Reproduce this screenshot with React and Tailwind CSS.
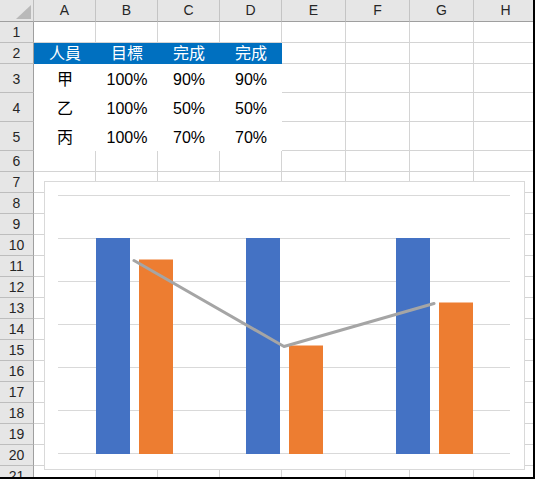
import React from 'react';

const cols = ['A', 'B', 'C', 'D', 'E', 'F', 'G', 'H'];
const rowCount = 21;
const tallRows = [3, 4, 5];

const header = ['人員', '目標', '完成', '完成'];
const data = {
  3: ['甲', '100%', '90%', '90%'],
  4: ['乙', '100%', '50%', '50%'],
  5: ['丙', '100%', '70%', '70%'],
};

const groups = [
  { x: 52, done: 0.9 },
  { x: 202, done: 0.5 },
  { x: 352, done: 0.7 },
];

const font = { fontFamily: '"Liberation Sans", "Noto Sans CJK TC", sans-serif' };

const Chart = () => {
  const base = 272;
  const unit = 215; // px per 100%
  const pts = groups.map((g) => `${g.x + 37},${base - g.done * unit}`).join(' ');
  return (
    <div className="absolute left-[44px] top-[181px] w-[481px] h-[289px] bg-white border border-[#d9d9d9]">
      <svg width="479" height="287" className="block">
        {[14, 57, 100, 143, 186, 229, 272].map((y) => (
          <line key={y} x1="13" x2="465" y1={y - 0.5} y2={y - 0.5} stroke="#d9d9d9" strokeWidth="1" />
        ))}
        {groups.map((g, i) => (
          <g key={i}>
            <rect x={g.x - 1} y={base - unit - 1} width="34" height={unit + 1} fill="#4472c4" />
            <rect x={g.x + 42} y={base - g.done * unit - 1} width="34" height={g.done * unit + 1} fill="#ed7d31" />
          </g>
        ))}
        <polyline points={pts} fill="none" stroke="#a5a5a5" strokeWidth="3" strokeLinejoin="round" strokeLinecap="round" />
      </svg>
    </div>
  );
};

const App = () => {
  const cells = [];

  // corner
  cells.push(
    <div key="corner" className="bg-[#e6e6e6] border-r border-b border-r-[#bdbdbd] border-b-[#9f9f9f]">
      <svg width="33" height="21" className="block">
        <polygon points="16,19 31,19 31,5" fill="#b9b9b9" />
      </svg>
    </div>
  );
  cols.forEach((c) => {
    cells.push(
      <div
        key={'h' + c}
        className="bg-[#e6e6e6] border-r border-b border-r-[#c4c4c4] border-b-[#9f9f9f] flex items-center justify-center text-[14px] text-[#262626]"
      >
        {c}
      </div>
    );
  });

  for (let r = 1; r <= rowCount; r++) {
    const tall = tallRows.includes(r);
    cells.push(
      <div
        key={'r' + r}
        className={`bg-[#e6e6e6] border-r border-b border-r-[#9f9f9f] border-b-[#bdbdbd] flex justify-center text-[14px] text-[#262626] ${
          tall ? 'items-end pb-[2px]' : 'items-center'
        }`}
      >
        {r}
      </div>
    );
    cols.forEach((c, ci) => {
      if (r === 2 && ci < 4) {
        cells.push(
          <div key={c + r} className="bg-[#0070c0] text-white text-[16px] flex items-center justify-center">
            {header[ci]}
          </div>
        );
      } else if (tall && ci < 4) {
        cells.push(
          <div key={c + r} className="bg-white text-black text-[16px] flex items-end justify-center pb-[1px]">
            {data[r][ci]}
          </div>
        );
      } else {
        cells.push(<div key={c + r} className="bg-white border-r border-b border-[#d4d4d4]" />);
      }
    });
  }

  return (
    <div className="relative w-[535px] h-[479px] overflow-hidden bg-white border-r-2 border-b-2 border-black" style={font}>
      <div className="grid grid-cols-[34px_62px_62px_62px_62px_64px_64px_64px_64px] grid-rows-[22px_21px_21px_29px_29px_29px_repeat(16,21px)]">
        {cells}
      </div>
      <Chart />
    </div>
  );
};

export default App;
